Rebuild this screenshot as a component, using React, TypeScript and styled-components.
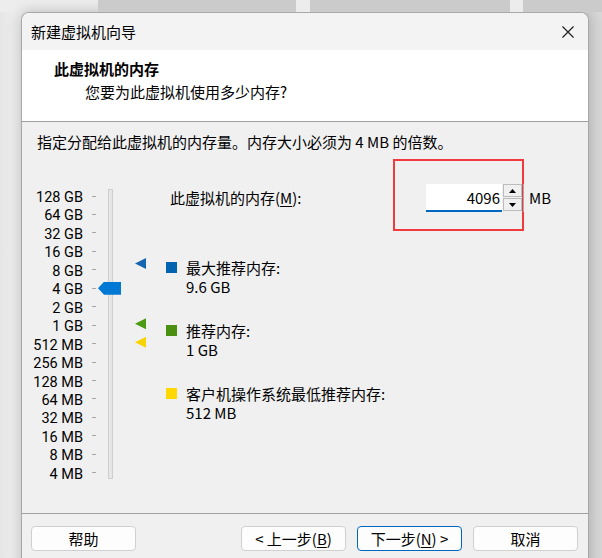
import styled, { createGlobalStyle } from 'styled-components';

const GlobalStyle = createGlobalStyle`
  html, body { margin: 0; padding: 0; }
  body {
    font-family: "Noto Sans CJK SC", "Noto Sans", sans-serif;
    font-size: 15px;
    color: #000;
    background: #efefef;
  }
`;

const Desktop = styled.div`
  width: 602px;
  height: 558px;
  overflow: hidden;
  background: linear-gradient(90deg, #e6e6e6 0, #efefef 21px, #efefef 560px, #d6d6d6 589px);
`;

const Tabs = styled.div`
  display: flex;
  height: 12px;
  padding-left: 98px;
  background: #ededed;
`;

const Tab = styled.div<{ $w: number; $gap?: boolean }>`
  width: ${({ $w }) => $w}px;
  flex: none;
  background: ${({ $gap }) => ($gap ? '#ececec' : '#cbcbcb')};
`;

const Dialog = styled.div`
  margin-left: 21px;
  width: 566px;
  height: 560px;
  border: 1px solid #a8a8a8;
  border-bottom: none;
  border-radius: 8px 8px 0 0;
  background: #f0f0f0;
  box-shadow: 0 0 14px rgba(0, 0, 0, 0.22);
  overflow: hidden;
`;

const TitleBar = styled.div`
  display: flex;
  align-items: center;
  height: 37px;
  padding-left: 9px;
  background: #f3f3f3;
`;

const TitleText = styled.div`
  flex: 1;
  line-height: 37px;
`;

const CloseButton = styled.div`
  width: 40px;
  height: 37px;
  display: flex;
  align-items: center;
  justify-content: center;
`;

const Header = styled.div`
  height: 72px;
  padding: 8px 0 0 32px;
  box-sizing: border-box;
  background: #fff;
  border-bottom: 1px solid #a0a0a0;
`;

const HeaderTitle = styled.div`
  font-weight: 700;
  line-height: 22px;
`;

const HeaderSub = styled.div`
  margin: 1px 0 0 31px;
  line-height: 22px;
`;

const Body = styled.div`
  height: 391px;
  box-sizing: border-box;
  padding: 9px 0 0 0;
`;

const Intro = styled.div`
  padding-left: 15px;
  line-height: 22px;
`;

const Content = styled.div`
  display: flex;
  margin-top: 26px;
`;

const Scale = styled.div`
  display: flex;
  padding-top: 8px;
`;

const ScaleLabels = styled.div`
  display: flex;
  flex-direction: column;
  justify-content: space-between;
  height: 295px;
`;

const ScaleRow = styled.div`
  display: flex;
  align-items: center;
  height: 18px;
`;

const ScaleLabel = styled.span`
  width: 61px;
  padding-top: 3px;
  text-align: right;
  font-family: Roboto, "Noto Sans", sans-serif;
  font-size: 14.5px;
  line-height: 17px;
  white-space: nowrap;
`;

const Tick = styled.span`
  width: 4px;
  height: 1px;
  margin-left: 9px;
  background: #a6a6a6;
`;

const Track = styled.div`
  position: relative;
  width: 3px;
  height: 288px;
  margin: 2px 0 0 12px;
  border: 1px solid #cfcfcf;
  background: #e6e6e6;
`;

const Thumb = styled.div`
  position: absolute;
  left: -11px;
  width: 23px;
  height: 13px;
  background: #0078d4;
  clip-path: polygon(0 50%, 6px 0, 100% 0, 100% 100%, 6px 100%);
`;

const Markers = styled.div`
  position: relative;
  width: 11px;
  margin-left: 22px;
`;

const Marker = styled.div<{ $color: string }>`
  position: absolute;
  left: 0;
  width: 11px;
  height: 11px;
  background: ${({ $color }) => $color};
  clip-path: polygon(0 50%, 100% 0, 100% 100%);
`;

const Panel = styled.div`
  display: flex;
  flex-direction: column;
  margin-left: 20px;
`;

const MemoryRow = styled.div`
  position: relative;
  display: flex;
  align-items: center;
  height: 28px;
  margin-top: 5px;
`;

const MemoryLabel = styled.label`
  width: 260px;
  padding-left: 4px;
  box-sizing: border-box;
  line-height: 20px;
`;

const Key = styled.span`
  text-decoration: underline;
  text-underline-offset: 2px;
`;

const NumberField = styled.div`
  width: 76px;
  height: 28px;
  box-sizing: border-box;
  padding-right: 2px;
  background: #fff;
  border-bottom: 2px solid #0067c0;
  text-align: right;
  line-height: 27px;
`;

const Spinner = styled.div`
  position: relative;
  display: flex;
  flex-direction: column;
  width: 22px;
  height: 28px;
  box-sizing: border-box;
  border-right: 1px solid #a8a8a8;
`;

const SpinButton = styled.div`
  flex: 1;
  display: flex;
  align-items: center;
  justify-content: center;
  margin: 0 1px 1px 1px;
  border: 1px solid #bcbcbc;
  background: #f0f0f0;
`;

const Unit = styled.span`
  margin-left: 5px;
  line-height: 20px;
`;

const Highlight = styled.div`
  position: absolute;
  left: 227px;
  top: -25px;
  width: 131px;
  height: 72px;
  box-sizing: border-box;
  border: 2px solid #f03a3d;
  pointer-events: none;
`;

const Legend = styled.div`
  display: flex;
  flex-direction: column;
  gap: 25px;
  margin-top: 46px;
`;

const LegendItem = styled.div`
  display: grid;
  grid-template-columns: 11px auto;
  column-gap: 9px;
  line-height: 19px;
`;

const Swatch = styled.span<{ $color: string }>`
  width: 11px;
  height: 11px;
  margin-top: 4px;
  background: ${({ $color }) => $color};
`;

const Footer = styled.div`
  display: flex;
  gap: 11px;
  padding: 12px 10px 0 9px;
  border-top: 1px solid #a0a0a0;
`;

const Button = styled.div<{ $primary?: boolean }>`
  width: 105px;
  height: 25px;
  box-sizing: border-box;
  display: flex;
  align-items: center;
  justify-content: center;
  border: 1px solid ${({ $primary }) => ($primary ? '#0067c0' : '#d0d0d0')};
  border-radius: 4px;
  background: #fdfdfd;
  line-height: 20px;
  white-space: nowrap;
`;

const Spacer = styled.div`
  flex: 1;
`;

const labels = [
  '128 GB', '64 GB', '32 GB', '16 GB', '8 GB', '4 GB', '2 GB', '1 GB',
  '512 MB', '256 MB', '128 MB', '64 MB', '32 MB', '16 MB', '8 MB', '4 MB',
];

const MAX_MB = 128 * 1024;

// centre of a value on the scale, measured from the top of the labels
const posOf = (mb: number) => 9 + (Math.log2(MAX_MB) - Math.log2(mb)) * 18.47;

const markers = [
  { mb: 9.6 * 1024, color: '#1565b0' },
  { mb: 1024, color: '#4a9a12' },
  { mb: 512, color: '#f7d300' },
];

const legend = [
  { color: '#0063b1', title: '最大推荐内存:', value: '9.6 GB' },
  { color: '#4a8f0f', title: '推荐内存:', value: '1 GB' },
  { color: '#ffd800', title: '客户机操作系统最低推荐内存:', value: '512 MB' },
];

export default function App() {
  const current = 4096;

  return (
    <Desktop>
      <GlobalStyle />
      <Tabs>
        <Tab $w={198} />
        <Tab $w={14} $gap />
        <Tab $w={200} />
        <Tab $w={13} $gap />
        <Tab $w={79} />
      </Tabs>
      <Dialog>
        <TitleBar>
          <TitleText>新建虚拟机向导</TitleText>
          <CloseButton>
            <svg width="12" height="12" viewBox="0 0 12 12">
              <path d="M0.5 0.5 L11.5 11.5 M11.5 0.5 L0.5 11.5" stroke="#1a1a1a" strokeWidth="1.1" fill="none" />
            </svg>
          </CloseButton>
        </TitleBar>
        <Header>
          <HeaderTitle>此虚拟机的内存</HeaderTitle>
          <HeaderSub>您要为此虚拟机使用多少内存?</HeaderSub>
        </Header>
        <Body>
          <Intro>指定分配给此虚拟机的内存量。内存大小必须为 4 MB 的倍数。</Intro>
          <Content>
            <Scale>
              <ScaleLabels>
                {labels.map((l) => (
                  <ScaleRow key={l}>
                    <ScaleLabel>{l}</ScaleLabel>
                    <Tick />
                  </ScaleRow>
                ))}
              </ScaleLabels>
              <Track>
                <Thumb style={{ top: posOf(current) - 2 - 1 - 6.5 }} />
              </Track>
            </Scale>
            <Markers>
              {markers.map((m) => (
                <Marker key={m.mb} $color={m.color} style={{ top: 8 + posOf(m.mb) - 7 }} />
              ))}
            </Markers>
            <Panel>
              <MemoryRow>
                <Highlight />
                <MemoryLabel>
                  此虚拟机的内存(<Key>M</Key>):
                </MemoryLabel>
                <NumberField>{current}</NumberField>
                <Spinner>
                  <SpinButton>
                    <svg width="7" height="4" viewBox="0 0 7 4">
                      <path d="M3.5 0 L7 4 L0 4 Z" fill="#000" />
                    </svg>
                  </SpinButton>
                  <SpinButton>
                    <svg width="7" height="4" viewBox="0 0 7 4">
                      <path d="M0 0 L7 0 L3.5 4 Z" fill="#000" />
                    </svg>
                  </SpinButton>
                </Spinner>
                <Unit>MB</Unit>
              </MemoryRow>
              <Legend>
                {legend.map((item) => (
                  <LegendItem key={item.title}>
                    <Swatch $color={item.color} />
                    <span>{item.title}</span>
                    <span />
                    <span>{item.value}</span>
                  </LegendItem>
                ))}
              </Legend>
            </Panel>
          </Content>
        </Body>
        <Footer>
          <Button>帮助</Button>
          <Spacer />
          <Button>
            &lt; 上一步(<Key>B</Key>)
          </Button>
          <Button $primary>
            下一步(<Key>N</Key>) &gt;
          </Button>
          <Button>取消</Button>
        </Footer>
      </Dialog>
    </Desktop>
  );
}
